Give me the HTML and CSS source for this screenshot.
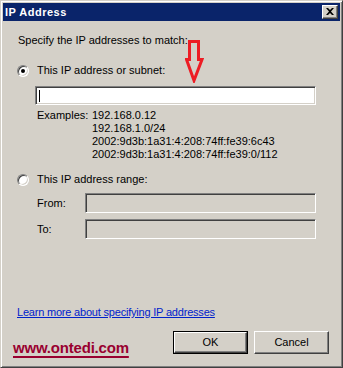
FILE: index.html
```html
<!DOCTYPE html>
<html>
<head>
<meta charset="utf-8">
<link rel="stylesheet" href="styles.css">
</head>
<body>
<div class="window">
  <div class="titlebar">
    <span class="title">IP Address</span>
    <span class="close-btn">
      <svg width="8" height="7" viewBox="0 0 8 7"><path d="M0 0h2l2 2 2-2h2L5 3.5 8 7H6L4 5 2 7H0l3-3.5z" fill="#000"/></svg>
    </span>
  </div>
  <div class="content">
    <p class="prompt">Specify the IP addresses to match:</p>
    <div class="radio-row">
      <span class="radio checked"></span>
      <span class="radio-label">This IP address or subnet:</span>
    </div>
    <div class="field field-main"><span class="caret"></span></div>
    <div class="examples">
      <span class="ex-label">Examples:</span>
      <span>192.168.0.12</span>
      <span></span><span>192.168.1.0/24</span>
      <span></span><span>2002:9d3b:1a31:4:208:74ff:fe39:6c43</span>
      <span></span><span>2002:9d3b:1a31:4:208:74ff:fe39:0/112</span>
    </div>
    <div class="radio-row radio-row-2">
      <span class="radio"></span>
      <span class="radio-label">This IP address range:</span>
    </div>
    <div class="range">
      <span class="range-label">From:</span>
      <div class="field field-disabled"></div>
      <span class="range-label">To:</span>
      <div class="field field-disabled"></div>
    </div>
    <a class="link" href="#">Learn more about specifying IP addresses</a>
    <div class="footer">
      <span class="brand">www.ontedi.com</span>
      <div class="buttons">
        <span class="btn btn-default"><span class="btn-inner">OK</span></span>
        <span class="btn"><span class="btn-inner">Cancel</span></span>
      </div>
    </div>
  </div>
  <svg class="arrow" width="19" height="43" viewBox="0 0 19 43">
    <polygon points="4.5,1.5 13.5,1.5 13.5,19.5 17,19.5 9,40.5 1.5,19.5 4.5,19.5" fill="none" stroke="#ed1c24" stroke-width="3" stroke-linejoin="miter"/>
  </svg>
</div>
</body>
</html>
```
FILE: styles.css
```css
html, body {
  margin: 0;
  padding: 0;
  background: #d4d0c8;
}

.window {
  position: relative;
  box-sizing: border-box;
  width: 343px;
  height: 368px;
  background: #d4d0c8;
  border-top: 1px solid #d4d0c8;
  border-left: 1px solid #d4d0c8;
  border-right: 1px solid #404040;
  border-bottom: 1px solid #404040;
  box-shadow: inset 1px 1px 0 #ffffff, inset -1px -1px 0 #808080;
  padding: 2px;
  display: flex;
  flex-direction: column;
  font-family: "Liberation Sans", Arial, sans-serif;
  font-size: 11px;
  color: #000;
}

.titlebar {
  height: 18px;
  background: #0a246a;
  display: flex;
  align-items: center;
  justify-content: space-between;
  padding: 0 2px 0 2px;
}

.title {
  color: #fff;
  font-weight: bold;
  font-size: 11px;
  letter-spacing: 0.5px;
}

.close-btn {
  box-sizing: border-box;
  width: 16px;
  height: 14px;
  background: #d4d0c8;
  border-top: 1px solid #fff;
  border-left: 1px solid #fff;
  border-right: 1px solid #404040;
  border-bottom: 1px solid #404040;
  box-shadow: inset -1px -1px 0 #808080;
  display: flex;
  align-items: center;
  justify-content: center;
  padding: 0 1px 1px 0;
}

.close-btn svg {
  display: block;
}

.content {
  flex: 1;
  padding: 0 11px 0 14px;
  display: flex;
  flex-direction: column;
  align-items: flex-start;
  line-height: 13px;
}

.prompt {
  margin: 13px 0 0 1px;
}

.radio-row {
  height: 13px;
  margin-top: 17px;
  display: flex;
  align-items: center;
  gap: 8px;
}

.radio-row-2 {
  margin-top: 12px;
}

.radio {
  box-sizing: border-box;
  width: 12px;
  height: 12px;
  border-radius: 50%;
  background: #fff;
  border: 1px solid;
  border-color: #808080 #ffffff #ffffff #808080;
  box-shadow: inset 1px 1px 0 #404040, inset -1px -1px 0 #d4d0c8;
  position: relative;
}

.radio.checked::after {
  content: "";
  position: absolute;
  left: 3px;
  top: 3px;
  width: 4px;
  height: 4px;
  border-radius: 50%;
  background: #000;
}

.field {
  box-sizing: border-box;
  background: #fff;
  border-top: 1px solid #808080;
  border-left: 1px solid #808080;
  border-right: 1px solid #fff;
  border-bottom: 1px solid #fff;
  box-shadow: inset 1px 1px 0 #404040, inset -1px -1px 0 #d4d0c8;
}

.field-main {
  width: 281px;
  height: 19px;
  margin: 9px 0 0 18px;
  padding: 3px 0 0 3px;
}

.caret {
  display: block;
  width: 1px;
  height: 12px;
  background: #000;
}

.examples {
  margin: 4px 0 0 20px;
  display: grid;
  grid-template-columns: 55px auto;
}

.range {
  margin: 7px 0 0 20px;
  display: grid;
  grid-template-columns: 48px 231px;
  grid-auto-rows: 20px;
  row-gap: 6px;
  align-items: center;
}

.field-disabled {
  height: 20px;
  background: #d4d0c8;
}

.link {
  margin: 67px 0 0 0;
  color: #0022cc;
  text-decoration: underline;
  letter-spacing: -0.2px;
}

.footer {
  align-self: stretch;
  margin-top: 12px;
  height: 23px;
  display: flex;
  justify-content: space-between;
}

.brand {
  margin: 8px 0 0 -4px;
  font-size: 15px;
  line-height: 17px;
  font-weight: bold;
  color: #990030;
  text-decoration: underline;
  text-decoration-thickness: 2px;
  text-underline-offset: 3px;
  letter-spacing: -0.2px;
}

.buttons {
  display: flex;
  gap: 6px;
}

.btn {
  box-sizing: border-box;
  width: 75px;
  height: 23px;
  background: #d4d0c8;
  border-top: 1px solid #fff;
  border-left: 1px solid #fff;
  border-right: 1px solid #404040;
  border-bottom: 1px solid #404040;
  box-shadow: inset -1px -1px 0 #808080;
  display: flex;
}

.btn-inner {
  flex: 1;
  display: flex;
  align-items: center;
  justify-content: center;
  padding-bottom: 1px;
}

.btn-default {
  border: 1px solid #000;
  box-shadow: none;
}

.btn-default .btn-inner {
  border-top: 1px solid #fff;
  border-left: 1px solid #fff;
  border-right: 1px solid #404040;
  border-bottom: 1px solid #404040;
  box-shadow: inset -1px -1px 0 #808080;
}

.arrow {
  position: absolute;
  left: 184px;
  top: 39px;
}
```
